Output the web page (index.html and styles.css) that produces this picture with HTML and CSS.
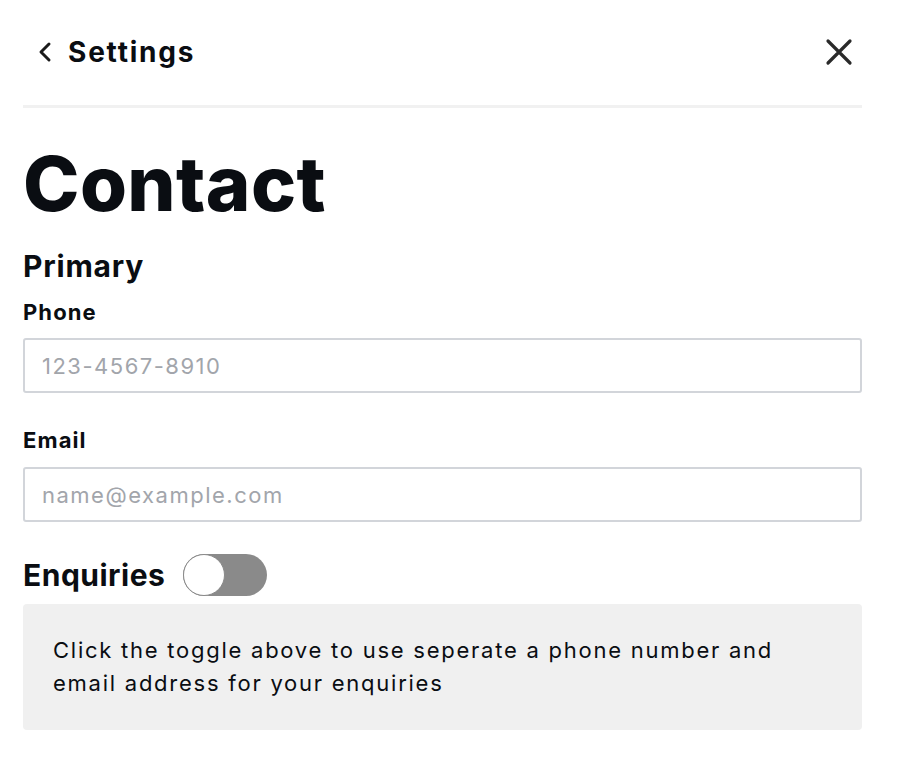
FILE: index.html
```html
<!DOCTYPE html>
<html>
<head>
<meta charset="utf-8">
<link rel="stylesheet" href="styles.css">
</head>
<body>
<div class="panel">
  <header class="topbar">
    <div class="back">
      <svg class="chev" width="16" height="22" viewBox="0 0 16 22"><path d="M12 3 L4 11 L12 19" fill="none" stroke="#1a1a1a" stroke-width="3" stroke-linecap="round" stroke-linejoin="round"/></svg>
      <span class="title">Settings</span>
    </div>
    <svg class="close" width="28" height="28" viewBox="0 0 28 28"><path d="M3 3 L25 25 M25 3 L3 25" fill="none" stroke="#2a2a2a" stroke-width="3.2" stroke-linecap="round"/></svg>
  </header>
  <h1 class="heading">Contact</h1>
  <h2 class="section">Primary</h2>
  <label class="label">Phone</label>
  <input class="field" type="text" placeholder="123-4567-8910">
  <label class="label label-gap">Email</label>
  <input class="field field-tight" type="text" placeholder="name@example.com">
  <div class="enq-row">
    <h2 class="section">Enquiries</h2>
    <div class="toggle"><div class="knob"></div></div>
  </div>
  <div class="info">Click the toggle above to use seperate a phone number and email address for your enquiries</div>
</div>
</body>
</html>
```
FILE: styles.css
```css
* { box-sizing: border-box; }
body {
  margin: 0;
  background: #fff;
  font-family: Inter, "Noto Sans", sans-serif;
  color: #0a0d12;
}
.panel {
  width: 839px;
  margin-left: 23px;
  display: flex;
  flex-direction: column;
}
.topbar {
  height: 108px;
  border-bottom: 3px solid #f1f1f1;
  display: flex;
  align-items: center;
  justify-content: space-between;
  padding: 0 9px 2px 14px;
}
.back {
  display: flex;
  align-items: center;
  gap: 15px;
}
.title {
  font-size: 28px;
  font-weight: 700;
  letter-spacing: 1.8px;
}
.heading {
  margin: 29px 0 0;
  font-size: 76px;
  font-weight: 800;
  line-height: 92px;
  letter-spacing: 0.4px;
}
.section {
  margin: 17px 0 0;
  font-size: 30px;
  font-weight: 700;
  line-height: 40px;
  letter-spacing: 0.8px;
}
.label {
  margin-top: 12px;
  font-size: 22px;
  font-weight: 700;
  line-height: 28px;
  letter-spacing: 1.1px;
}
.label-gap { margin-top: 33px; }
.field {
  margin-top: 12px;
  height: 55px;
  border: 2px solid #d2d5da;
  border-radius: 3px;
  padding: 0 17px;
  font-family: inherit;
  font-size: 22px;
  letter-spacing: 1.5px;
  color: #333;
  outline: none;
}
.field-tight { margin-top: 13px; }
.field::placeholder { color: #a2a5ab; }
.enq-row {
  margin-top: 32px;
  display: flex;
  align-items: center;
  gap: 18px;
}
.enq-row .section { margin: 0; letter-spacing: 0.5px; }
.toggle {
  width: 84px;
  height: 42px;
  border-radius: 21px;
  background: #8a8a8a;
  position: relative;
}
.knob {
  position: absolute;
  left: 0;
  top: 0;
  width: 42px;
  height: 42px;
  border-radius: 50%;
  background: #fff;
  border: 1.5px solid #8a8a8a;
}
.info {
  margin-top: 8px;
  background: #f0f0f0;
  border-radius: 4px;
  padding: 30px 30px 30px;
  font-size: 22px;
  line-height: 33px;
  letter-spacing: 1.75px;
  color: #0a0d12;
}
```
